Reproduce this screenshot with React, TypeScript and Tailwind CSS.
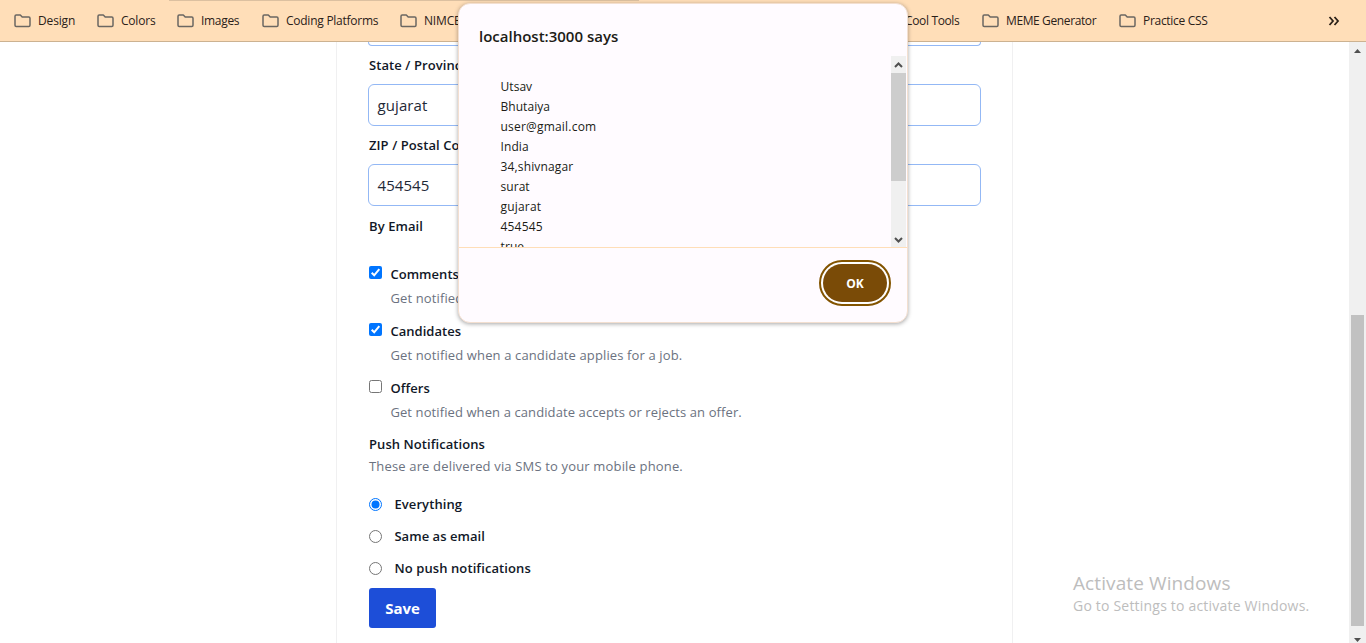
import React from "react";

function Folder() {
  return (
    <svg width="17" height="14" viewBox="0 0 17 14" fill="none" className="shrink-0">
      <path
        d="M1 2.2Q1 1 2.2 1H6.3L8.2 3H14.8Q16 3 16 4.2V11.3Q16 12.5 14.8 12.5H2.2Q1 12.5 1 11.3Z"
        stroke="#6b6762"
        strokeWidth="1.5"
        strokeLinejoin="round"
      />
    </svg>
  );
}

function Bookmark({ label, className }: { label: string; className: string }) {
  return (
    <div className={`flex shrink-0 items-center gap-[7.3px] whitespace-nowrap ${className}`}>
      <Folder />
      <span>{label}</span>
    </div>
  );
}

function Bookmarks() {
  return (
    <header className="flex h-[42px] shrink-0 flex-col border-b border-[#ccb291] bg-[#ffdeb8]">
      <div className="ml-[169px] h-px w-[470px] bg-[#dcc0a0]" />
      <div className="flex h-[40px] items-center pl-[13.7px] text-[12px] text-[#2b2118]">
        <Bookmark label="Design" className="w-[83px] tracking-[-0.15px]" />
        <Bookmark label="Colors" className="w-[80px] tracking-[-0.2px]" />
        <Bookmark label="Images" className="w-[85px] tracking-[-0.3px]" />
        <Bookmark label="Coding Platforms" className="w-[138px] tracking-[-0.25px]" />
        <Bookmark label="NIMCET" className="w-[481px] tracking-[-0.15px]" />
        <Bookmark label="Cool Tools" className="w-[101px] tracking-[-0.35px]" />
        <Bookmark label="MEME Generator" className="w-[137px] tracking-[-0.38px]" />
        <Bookmark label="Practice CSS" className="w-[209px] tracking-[-0.3px]" />
        <svg width="12" height="10" viewBox="0 0 12 10" fill="none">
          <path d="M1.5 1L5 5L1.5 9M6.5 1L10 5L6.5 9" stroke="#2b2118" strokeWidth="1.8" />
        </svg>
      </div>
    </header>
  );
}

function Field({ label, value, className }: { label: string; value: string; className: string }) {
  return (
    <div className="h-[80px]">
      <div className="flex h-[30px] items-center pb-[7px] pl-px text-[13px] font-semibold text-[#111827]">
        <span className="tracking-[0.08px]">{label}</span>
      </div>
      <div className="flex h-[42px] items-center rounded-md border border-[#93b8f5] bg-white pl-[8.5px] pt-px text-[15px] text-[#1f2937]">
        <span className={className}>{value}</span>
      </div>
    </div>
  );
}

function Check({ title, text, checked }: { title: React.ReactNode; text: React.ReactNode; checked?: boolean }) {
  return (
    <div className="flex h-[57px] gap-[8.4px] pl-px">
      {checked ? (
        <svg width="13" height="13" viewBox="0 0 13 13" className="mt-[4px] shrink-0">
          <rect width="13" height="13" rx="2" fill="#0075ff" />
          <path d="M2.7 6.8L5.2 9.3L10.3 3.1" stroke="white" strokeWidth="2" fill="none" />
        </svg>
      ) : (
        <div className="mt-[4px] size-[13px] shrink-0 rounded-[2.5px] border border-[#767676]" />
      )}
      <div className="whitespace-nowrap text-[13px] leading-[24px]">
        <div className="font-semibold text-[#111827]">{title}</div>
        <div className="text-[#6b7280]">{text}</div>
      </div>
    </div>
  );
}

function Radio({ label, on }: { label: React.ReactNode; on?: boolean }) {
  return (
    <div className="flex h-[32px] items-center gap-[12.4px] pl-px">
      <svg width="13" height="13" viewBox="0 0 13 13">
        <circle cx="6.5" cy="6.5" r="6" fill="white" stroke={on ? "#0075ff" : "#767676"} />
        {on && <circle cx="6.5" cy="6.5" r="4" fill="#0075ff" />}
      </svg>
      <span className="pt-px text-[13px] font-semibold text-[#111827]">{label}</span>
    </div>
  );
}

function Form() {
  return (
    <main className="flex min-h-0 w-[677px] flex-col overflow-hidden border-x border-[#f0f0f1] px-[31px]">
      <div className="h-[4px] shrink-0 rounded-b-md border-x border-b border-[#93b8f5]" />
      <div className="mt-[8px]">
        <Field label="State / Province" value="gujarat" className="tracking-[0.1px]" />
        <Field label="ZIP / Postal Code" value="454545" className="tracking-[0.05px]" />
      </div>
      <div className="flex h-[24px] items-center pl-px pt-[2px] text-[13px] font-semibold text-[#111827]">
        <span className="tracking-[0.08px]">By Email</span>
      </div>
      <div className="mt-[24px]">
        <Check checked title={<span className="tracking-[0.05px]">Comments</span>} text={<span className="tracking-[0.13px]">Get notified when someone posts a comment.</span>} />
        <Check checked title={<span className="tracking-[0.03px]">Candidates</span>} text={<span className="tracking-[0.13px]">Get notified when a candidate applies for a job.</span>} />
        <Check title={<span className="tracking-[0.05px]">Offers</span>} text={<span className="tracking-[0.1px]">Get notified when a candidate accepts or rejects an offer.</span>} />
      </div>
      <div className="pl-px text-[13px]">
        <div className="flex h-[22px] items-center pt-[2px] font-semibold text-[#111827]"><span className="tracking-[0.07px]">Push Notifications</span></div>
        <div className="flex h-[22px] items-center pt-[2px] text-[#6b7280]"><span className="tracking-[0.16px]">These are delivered via SMS to your mobile phone.</span></div>
      </div>
      <div className="mt-[11px]">
        <Radio on label={<span className="tracking-[0.1px]">Everything</span>} />
        <Radio label={<span className="tracking-[0.05px]">Same as email</span>} />
        <Radio label={<span className="tracking-[0.1px]">No push notifications</span>} />
      </div>
      <button className="ml-px mt-[4px] h-[40px] w-[67px] shrink-0 rounded-[3px] bg-[#1d4ed8] text-[15px] font-bold text-white">
        <span className="tracking-[-0.1px]">Save</span>
      </button>
    </main>
  );
}

function Dialog() {
  return (
    <section className="absolute left-[458px] top-[3px] flex h-[320px] w-[450px] flex-col overflow-hidden rounded-[12px] border border-[#f3dfd0] bg-[#fffbff] text-[#201b16] shadow-[0_1px_4px_rgba(0,0,0,0.35)]">
      <h1 className="flex h-[52px] shrink-0 items-center pl-[20px] pt-[12px] text-[15px] font-semibold">
        <span className="tracking-[0px]">localhost:3000 says</span>
      </h1>
      <div className="flex h-[191px] shrink-0 justify-between overflow-hidden pr-px">
        <div className="pl-[41.5px] pt-[21px] text-[12px] leading-[20px]">
          <p className="tracking-[0.05px]">Utsav</p>
          <p className="tracking-[0.05px]">Bhutaiya</p>
          <p className="tracking-[0.2px]">user@gmail.com</p>
          <p className="tracking-[0.1px]">India</p>
          <p className="tracking-[0.15px]">34,shivnagar</p>
          <p className="tracking-[0.05px]">surat</p>
          <p className="tracking-[0.2px]">gujarat</p>
          <p className="tracking-[0.2px]">454545</p>
          <p className="tracking-[0.1px]">true</p>
        </div>
        <div className="flex w-[15px] flex-col items-center bg-[#f0f0f0]">
          <svg width="15" height="17" viewBox="0 0 15 17" className="shrink-0">
            <path d="M4 11L7.5 7.5L11 11" stroke="#505050" strokeWidth="2" fill="none" />
          </svg>
          <div className="h-[108px] w-full shrink-0 bg-[#cdcdcd]" />
          <div className="grow" />
          <svg width="15" height="17" viewBox="0 0 15 17" className="shrink-0">
            <path d="M4 8L7.5 11.5L11 8" stroke="#505050" strokeWidth="2" fill="none" />
          </svg>
        </div>
      </div>
      <div className="flex grow justify-end border-t border-[#ffdeb8] pr-[16px] pt-[12px]">
        <div className="h-[46px] w-[72px] rounded-full border-2 border-[#835400] bg-white p-[2px]">
          <button className="flex size-full items-center justify-center rounded-full bg-[#7a4b07] pt-[2px] text-[12px] font-bold text-white">OK</button>
        </div>
      </div>
    </section>
  );
}

export default function App() {
  return (
    <div
      className="relative flex h-[643px] w-[1366px] flex-col overflow-hidden bg-white"
      style={{ fontFamily: '"Open Sans", "Noto Sans", sans-serif' }}
    >
      <Bookmarks />
      <div className="flex min-h-0 grow">
        <div className="w-[336px] shrink-0" />
        <Form />
        <aside className="flex grow flex-col justify-end pb-[27px] pl-[60px] text-[#bdbdbd]">
          <div className="text-[19px] leading-[26px]"><span className="tracking-[0.1px]">Activate Windows</span></div>
          <div className="text-[14px] leading-[20px]"><span className="tracking-[0.2px]">Go to Settings to activate Windows.</span></div>
        </aside>
        <div className="flex w-[17px] shrink-0 flex-col bg-[#f0f0f0]">
          <svg width="17" height="17" viewBox="0 0 17 17"><path d="M5 11H12L8.5 7Z" fill="#505050" /></svg>
          <div className="mx-[2px] mt-[256px] h-[311px] w-[13px] bg-[#c1c1c1]" />
          <svg width="17" height="17" viewBox="0 0 17 17" className="shrink-0"><path d="M5 12H12L8.5 16Z" fill="#505050" /></svg>
        </div>
      </div>
      <Dialog />
    </div>
  );
}
